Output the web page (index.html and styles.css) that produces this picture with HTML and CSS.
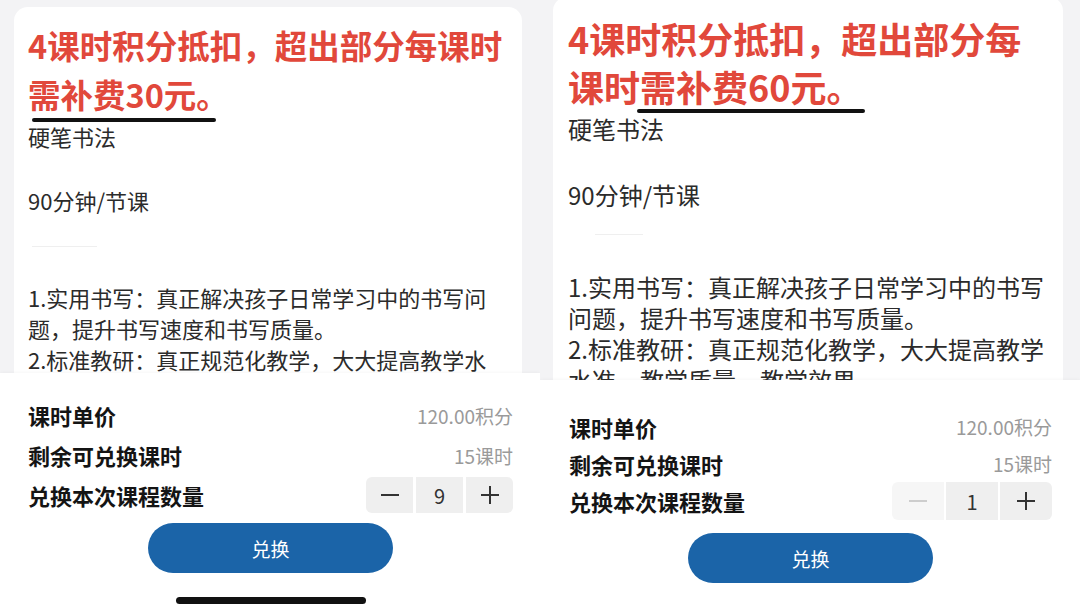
FILE: index.html
```html
<!DOCTYPE html>
<html lang="zh-CN">
<head>
  <meta charset="UTF-8" />
  <meta name="viewport" content="width=device-width, initial-scale=1.0" />
  <title>课时兑换</title>
  <link rel="stylesheet" href="styles.css">
</head>
<body>
  <!-- Two exchange screens, side by side -->
  <main class="compare">

    <!-- Left screen: 30 yuan top-up -->
    <section class="shot shot--left">
      <article class="course">
        <h2 class="course__title">4课时积分抵扣，超出部分每课时<span class="course__mark">需补费30元。</span></h2>
        <p class="course__name">硬笔书法</p>
        <p class="course__time">90分钟/节课</p>
        <hr class="course__rule">
        <p class="course__intro">1.实用书写：真正解决孩子日常学习中的书写问题，提升书写速度和书写质量。<br>2.标准教研：真正规范化教学，大大提高教学水准，教学质量，教学效果。</p>
      </article>

      <div class="sheet">
        <div class="sheet__row">
          <span class="sheet__label">课时单价</span>
          <span class="sheet__value">120.00积分</span>
        </div>
        <div class="sheet__row">
          <span class="sheet__label">剩余可兑换课时</span>
          <span class="sheet__value">15课时</span>
        </div>
        <div class="sheet__row">
          <span class="sheet__label">兑换本次课程数量</span>
          <div class="stepper">
            <span class="stepper__btn">
              <svg viewBox="0 0 20 20" width="20" height="20"><path d="M1 10h18" stroke="currentColor" stroke-width="2"/></svg>
            </span>
            <span class="stepper__num">9</span>
            <span class="stepper__btn">
              <svg viewBox="0 0 20 20" width="20" height="20"><path d="M10 1v18M1 10h18" stroke="currentColor" stroke-width="2"/></svg>
            </span>
          </div>
        </div>
        <button class="sheet__btn">兑换</button>
        <div class="home-bar"></div>
      </div>
    </section>

    <!-- Right screen: 60 yuan top-up -->
    <section class="shot shot--right">
      <article class="course">
        <h2 class="course__title">4课时积分抵扣，超出部分每课时<span class="course__mark">需补费60元。</span></h2>
        <p class="course__name">硬笔书法</p>
        <p class="course__time">90分钟/节课</p>
        <hr class="course__rule">
        <p class="course__intro">1.实用书写：真正解决孩子日常学习中的书写问题，提升书写速度和书写质量。<br>2.标准教研：真正规范化教学，大大提高教学水准，教学质量，教学效果。</p>
      </article>

      <div class="sheet">
        <div class="sheet__row">
          <span class="sheet__label">课时单价</span>
          <span class="sheet__value">120.00积分</span>
        </div>
        <div class="sheet__row">
          <span class="sheet__label">剩余可兑换课时</span>
          <span class="sheet__value">15课时</span>
        </div>
        <div class="sheet__row">
          <span class="sheet__label">兑换本次课程数量</span>
          <div class="stepper">
            <span class="stepper__btn stepper__btn--off">
              <svg viewBox="0 0 20 20" width="20" height="20"><path d="M1 10h18" stroke="currentColor" stroke-width="2"/></svg>
            </span>
            <span class="stepper__num">1</span>
            <span class="stepper__btn">
              <svg viewBox="0 0 20 20" width="20" height="20"><path d="M10 1v18M1 10h18" stroke="currentColor" stroke-width="2"/></svg>
            </span>
          </div>
        </div>
        <button class="sheet__btn">兑换</button>
      </div>
    </section>

  </main>
</body>
</html>
```

FILE: styles.css
```css
/* Page */
body {
  margin: 0;
  font-family: "Noto Sans CJK SC", "Noto Sans", sans-serif;
  color: #2b2b2b;
  background: #f3f3f5;
  overflow: hidden;
}
.compare {
  display: flex;
  width: 1080px;
  height: 607px;
}
/* One phone screen */
.shot {
  width: 540px;
  height: 607px;
  display: flex;
  flex-direction: column;
  overflow: hidden;
  background: #f3f3f5;
}
/* Course card (runs on under the sheet) */
.course {
  flex: none;
  box-sizing: border-box;
  background: #fff;
  border-radius: 14px 14px 0 0;
  overflow: hidden;
}
.shot--left .course {
  margin: 7px 18px 0 14px;
  height: 366px;
  padding: 13px 17px 0 14px;
}
.shot--right .course {
  margin: -3px 17px 0 13px;
  height: 383px;
  padding: 17px 15px 0;
}
.course__title {
  margin: 0;
  color: #e1483b;
  font-weight: 700;
}
.shot--left .course__title { font-size: 32.5px; line-height: 49px; }
.shot--right .course__title { font-size: 36px; line-height: 48px; }
/* Marker stroke under the fee */
.course__mark {
  position: relative;
}
.course__mark::after {
  content: '';
  position: absolute;
  height: 4px;
  border-radius: 2px;
  background: #111;
}
.shot--left .course__mark::after { left: 4px; right: 13px; bottom: -5px; }
.shot--right .course__mark::after { left: -3px; right: -2px; bottom: -1px; }
.course__name,
.course__time,
.course__intro {
  margin: 0;
}
.shot--left .course p { font-size: 22px; line-height: 31px; }
.shot--right .course p { font-size: 24px; line-height: 31px; }
.shot--left .course__name { margin-top: 3px; }
.shot--left .course__time { margin-top: 33px; }
.shot--right .course__name { margin-top: 3px; }
.shot--right .course__time { margin-top: 35px; }
.course__rule {
  border: none;
  height: 1px;
  width: 65px;
  background: #efefef;
  margin: 30px 0 0 4px;
}
.shot--right .course__rule { margin-top: 24px; width: 48px; margin-left: 27px; }
.shot--left .course__intro { margin-top: 35px; }
.shot--right .course__intro { margin-top: 36px; }
/* Bottom exchange sheet */
.sheet {
  flex: 1;
  display: flex;
  flex-direction: column;
  background: #fff;
  box-shadow: 0 -1px 3px rgba(0, 0, 0, 0.03);
  position: relative;
}
.shot--left .sheet { padding: 22px 27px 0 28px; }
.shot--right .sheet { padding: 28px 28px 0 29px; }
.sheet__row {
  display: flex;
  justify-content: space-between;
  align-items: center;
}
.shot--left .sheet__row { height: 40px; }
.shot--right .sheet__row { min-height: 37px; }
.sheet__label {
  font-size: 22px;
  font-weight: 700;
  color: #141414;
}
.sheet__value {
  font-size: 19px;
  color: #9a9a9a;
}
/* Quantity stepper */
.stepper {
  display: flex;
  gap: 3px;
}
.stepper__btn,
.stepper__num {
  display: flex;
  align-items: center;
  justify-content: center;
  width: 47px;
  height: 36px;
  background: #efefef;
  color: #333;
  font-size: 20px;
}
.stepper__btn:first-child { border-radius: 6px 0 0 6px; }
.stepper__btn:last-child { border-radius: 0 6px 6px 0; }
.stepper__btn--off {
  background: #f6f6f6;
  color: #cdcdcd;
}
.shot--right .stepper { gap: 2px; }
.shot--right .stepper__btn,
.shot--right .stepper__num {
  width: 52px;
  height: 38px;
}
.sheet__btn {
  align-self: center;
  width: 245px;
  height: 50px;
  border: none;
  border-radius: 25px;
  background: #1b64a8;
  color: #fff;
  font-family: inherit;
  font-size: 19px;
}
.shot--left .sheet__btn { margin-top: 8px; }
.shot--right .sheet__btn { margin-top: 13px; }
/* iOS home indicator */
.home-bar {
  align-self: center;
  width: 190px;
  height: 7px;
  margin-top: 24px;
  border-radius: 4px;
  background: #111;
}
```
